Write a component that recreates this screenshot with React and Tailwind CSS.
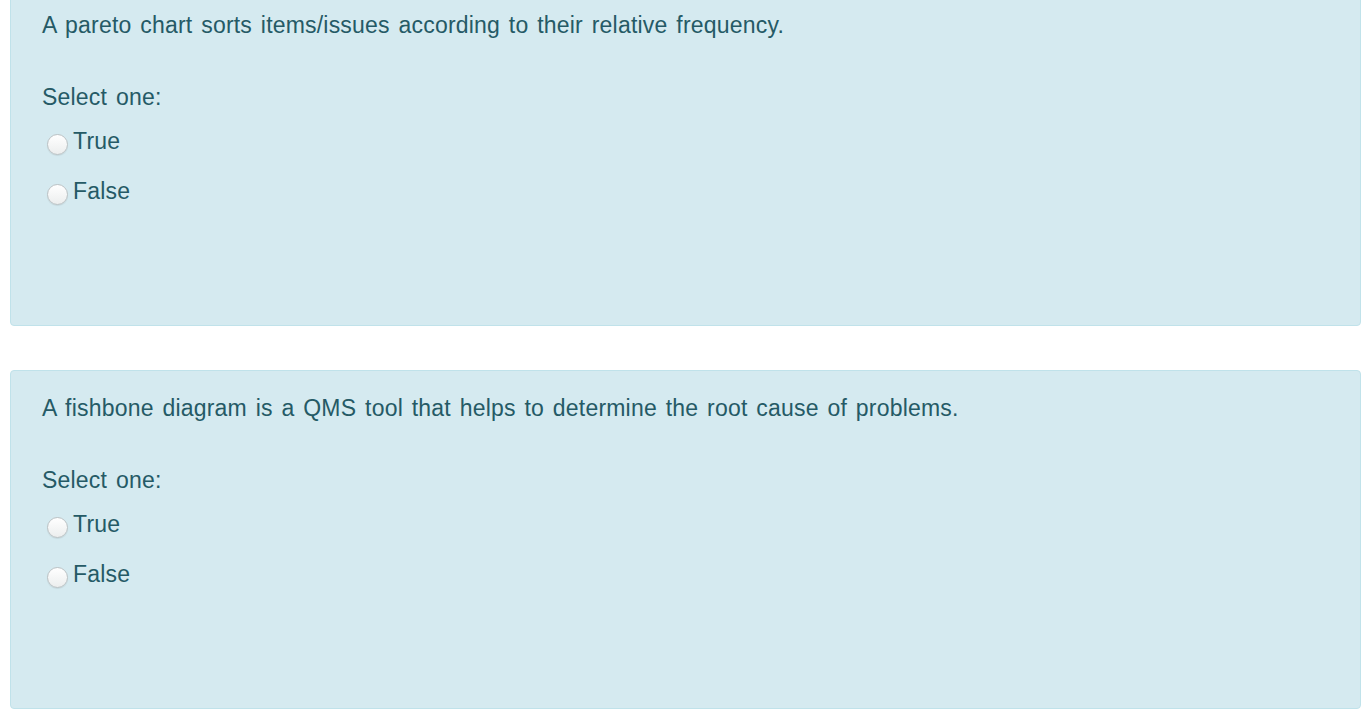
import React from 'react';

const questions = [
  'A pareto chart sorts items/issues according to their relative frequency.',
  'A fishbone diagram is a QMS tool that helps to determine the root cause of problems.',
];

const Radio = ({ label }) => (
  <label className="flex items-center h-[30px] pl-[5px] cursor-pointer">
    <span className="mt-[6px] w-[21px] h-[21px] rounded-full border border-[#bcc2c4] bg-gradient-to-b from-white to-[#eceeee] shadow-[0_1px_1px_rgba(0,0,0,0.08)] shrink-0" />
    <span className="ml-[5px]">{label}</span>
  </label>
);

const Question = ({ text, first }) => (
  <div
    className={`${first ? '-mt-[13px]' : 'mt-[44px]'} h-[339px] bg-[#d5eaf0] border border-[#c0e2ea] rounded-[4px] pl-[31px] pt-[22px]`}
  >
    <p className="leading-[30px]">{text}</p>
    <p className="mt-[42px] leading-[30px]">Select one:</p>
    <div className="mt-[14px] flex flex-col gap-[20px]">
      <Radio label="True" />
      <Radio label="False" />
    </div>
  </div>
);

export default function App() {
  return (
    <div
      className="min-h-[720px] bg-white pl-[10px] pr-[5px] overflow-hidden text-[23px] text-[#255a66] tracking-[0.2px] [word-spacing:2.2px]"
      style={{ fontFamily: '"Liberation Sans", Arial, sans-serif' }}
    >
      {questions.map((q, i) => (
        <Question key={i} text={q} first={i === 0} />
      ))}
    </div>
  );
}
